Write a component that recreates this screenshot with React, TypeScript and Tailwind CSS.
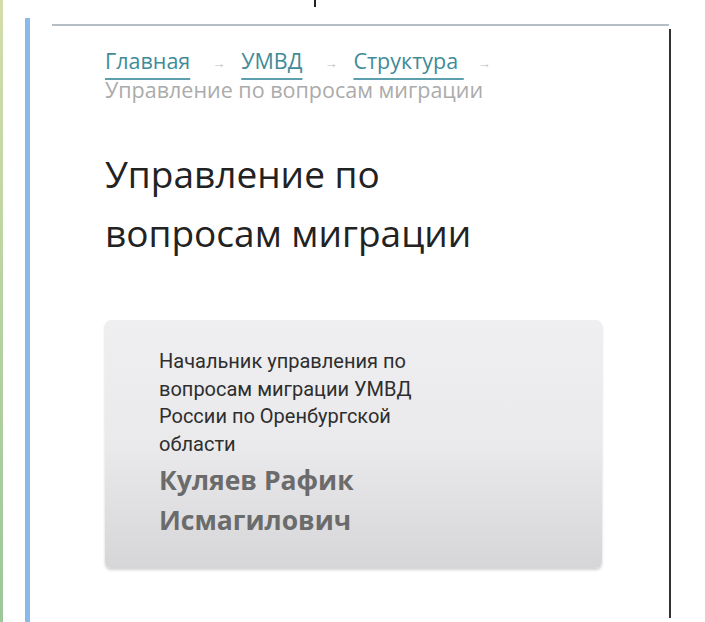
import React from "react";

const crumbs = ["Главная", "УМВД", "Структура\u00a0"];

export default function App() {
  return (
    <div className="relative flex w-[705px] h-[622px] overflow-hidden bg-white">
      {/* cut-off glyph from the line above */}
      <div className="absolute left-[314px] top-0 w-[2px] h-[7px] bg-[#222]" />

      {/* side strips */}
      <div className="w-[3px] h-full bg-gradient-to-b from-[#d3ddaa] to-[#9cc79a]" />
      <div className="ml-[22px] mt-[18px] w-[5px] bg-[#88bbea]" />

      {/* page panel */}
      <div className="ml-[22px] mt-[24px] w-[617px] border-t-[2px] border-[#b5bdc5]">
        <div
          className="pl-[53px] pt-[20px]"
          style={{ fontFamily: '"Open Sans", sans-serif' }}
        >
          <nav className="text-[21.5px] leading-[29px] text-[#ababab]">
            {crumbs.map((c, i) => (
              <span key={c}>
                <a className="text-[#3f8b99] underline decoration-[#5d9fac] decoration-2 underline-offset-[9px]">
                  {c}
                </a>
                <span
                  className={
                    i === crumbs.length - 1
                      ? "ml-[14px] text-[13px] leading-none align-middle text-[#bdbdbd]"
                      : "ml-[22px] mr-[16px] text-[13px] leading-none align-middle text-[#bdbdbd]"
                  }
                >
                  →
                </span>
              </span>
            ))}
            <br />
            <span>Управление по вопросам миграции</span>
          </nav>

          <h1 className="mt-[40px] w-[420px] text-[37px] leading-[59px] font-normal text-[#222]">
            Управление по вопросам миграции
          </h1>
        </div>

        {/* head of department card */}
        <div className="ml-[53px] mt-[58px] w-[497px] rounded-[6px] bg-gradient-to-b from-[#efeef0] via-[#eaeaec] to-[#d6d6d8] pl-[54px] pt-[28px] pb-[28px] shadow-[0_2px_3px_rgba(0,0,0,0.18)]">
          <p
            className="w-[260px] text-[20px] leading-[27.5px] text-[#2e2e2e]"
            style={{ fontFamily: "Roboto, sans-serif" }}
          >
            Начальник управления по вопросам миграции УМВД России по
            Оренбургской области
          </p>
          <p
            className="mt-[2px] w-[250px] text-[26.5px] leading-[40px] font-bold text-[#6b6b6b]"
            style={{ fontFamily: '"Open Sans", sans-serif' }}
          >
            Куляев Рафик Исмагилович
          </p>
        </div>
      </div>

      {/* right edge */}
      <div className="mt-[29px] mb-[4px] w-[2px] bg-[#333]" />
    </div>
  );
}
